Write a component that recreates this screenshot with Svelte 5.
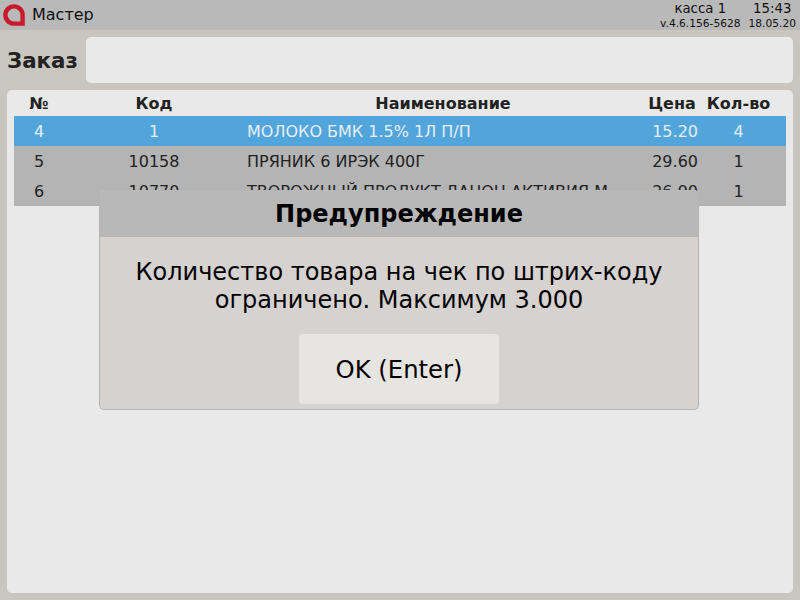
<script>
  const rows = [
    { num: 4, code: '1', name: 'МОЛОКО БМК 1.5% 1Л П/П', price: '15.20', qty: 4, selected: true },
    { num: 5, code: '10158', name: 'ПРЯНИК 6 ИРЭК 400Г', price: '29.60', qty: 1 },
    { num: 6, code: '10770', name: 'ТВОРОЖНЫЙ ПРОДУКТ ДАНОН АКТИВИЯ М', price: '26.90', qty: 1 }
  ];
</script>

<div class="screen">
  <header class="topbar">
    <svg class="logo" width="22" height="22" viewBox="0 0 22 22">
      <path d="M11 2.4a8.6 8.6 0 0 0 0 17.2h8.6V11A8.6 8.6 0 0 0 11 2.4z" fill="none" stroke="#c8192e" stroke-width="4.4" />
    </svg>
    <span class="title">Мастер</span>
    <div class="info">
      <div class="info-col till">
        <span class="big">касса 1</span>
        <span class="small">v.4.6.156-5628</span>
      </div>
      <div class="info-col clock">
        <span class="big">15:43</span>
        <span class="small">18.05.20</span>
      </div>
    </div>
  </header>

  <main class="content">
    <div class="order-row">
      <span class="order-label">Заказ</span>
      <div class="order-field"></div>
    </div>

    <section class="panel">
      <div class="grid head">
        <span>№</span>
        <span>Код</span>
        <span class="head-name">Наименование</span>
        <span>Цена</span>
        <span>Кол-во</span>
      </div>
      {#each rows as row}
        <div class="grid row" class:selected={row.selected}>
          <span>{row.num}</span>
          <span>{row.code}</span>
          <span class="name">{row.name}</span>
          <span class="price">{row.price}</span>
          <span>{row.qty}</span>
        </div>
      {/each}

      <div class="dialog">
        <div class="dialog-title">Предупреждение</div>
        <div class="dialog-body">
          <p>Количество товара на чек по штрих-коду ограничено. Максимум 3.000</p>
          <button class="ok">OK (Enter)</button>
        </div>
      </div>
    </section>
  </main>
</div>

<style>
  :global(body) {
    margin: 0;
    background: #c9c6c0;
    font-family: "DejaVu Sans", sans-serif;
  }

  .screen {
    width: 800px;
    height: 600px;
    display: flex;
    flex-direction: column;
    overflow: hidden;
    background: #c9c6c0;
  }

  .topbar {
    height: 30px;
    flex-shrink: 0;
    display: flex;
    align-items: center;
    padding: 0 4px 0 3px;
    background: #b9b9b9;
    color: #111;
  }

  .logo { flex-shrink: 0; }

  .title {
    margin-left: 7px;
    font-size: 16px;
    line-height: 30px;
  }

  .info {
    margin-left: auto;
    display: flex;
    gap: 8px;
    padding-top: 2px;
  }

  .info-col {
    display: flex;
    flex-direction: column;
    align-items: center;
  }

  .big {
    font-size: 13.33px;
    line-height: 16px;
  }

  .small {
    font-size: 10.67px;
    line-height: 14px;
  }

  .content {
    flex: 1;
    display: flex;
    flex-direction: column;
    gap: 7px;
    padding: 7px;
  }

  .order-row {
    height: 46px;
    display: flex;
    align-items: center;
    gap: 8px;
  }

  .order-label {
    width: 71px;
    font-size: 21.33px;
    font-weight: 700;
    color: #222;
  }

  .order-field {
    flex: 1;
    height: 100%;
    background: #e9e9e9;
    border-radius: 5px;
  }

  .panel {
    position: relative;
    flex: 1;
    background: #e9e9e9;
    border-radius: 5px;
    padding: 1px 7px 0;
  }

  .grid {
    display: grid;
    grid-template-columns: 50px 180px 1fr 64px 69px;
    align-items: center;
    padding-right: 13px;
    font-size: 16px;
    color: #222;
  }

  .grid span { text-align: center; }
  .grid .head-name { padding-left: 2px; }
  .grid .name {
    text-align: left;
    padding-left: 3px;
    white-space: nowrap;
    overflow: hidden;
  }

  .grid .price {
    text-align: right;
    padding-right: 6px;
  }

  .head {
    height: 25px;
    font-weight: 700;
  }

  .row {
    height: 30px;
    background: #b4b4b4;
    padding-top: 1px;
    box-sizing: border-box;
  }

  .row.selected {
    background: #52a5da;
    color: #e6eef4;
  }

  .dialog {
    position: absolute;
    left: 92px;
    top: 100px;
    width: 600px;
    height: 220px;
    box-sizing: border-box;
    border: 1px solid #b4b4b4;
    border-top: none;
    border-radius: 5px;
    overflow: hidden;
    background: #d6d2cf;
    color: #000;
  }

  .dialog-title {
    height: 47px;
    display: flex;
    align-items: center;
    justify-content: center;
    background: #b8b8b8;
    font-size: 24px;
    font-weight: 700;
  }

  .dialog-body {
    display: flex;
    flex-direction: column;
    align-items: center;
  }

  .dialog-body p {
    margin: 21px 0 0;
    width: 560px;
    font-size: 24px;
    line-height: 28px;
    text-align: center;
  }

  .ok {
    margin-top: 20px;
    width: 200px;
    height: 70px;
    border: none;
    border-radius: 4px;
    background: #e6e5e1;
    color: #000;
    font-family: inherit;
    font-size: 24.3px;
  }
</style>
